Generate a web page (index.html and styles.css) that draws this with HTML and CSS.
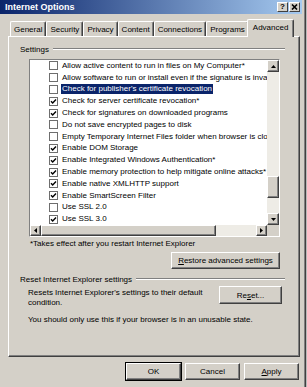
FILE: index.html
```html
<!DOCTYPE html>
<html lang="en">
<head>
  <meta charset="UTF-8" />
  <meta name="viewport" content="width=device-width, initial-scale=1" />
  <title>Internet Options</title>

  <!-- Dialog styles -->
  <link rel="stylesheet" href="styles.css">
</head>
<body>
  <div class="window">
    <!-- Title bar -->
    <div class="titlebar">
      <span class="title">Internet Options</span>
      <div class="caption">
        <span class="cap-btn">?</span>
        <span class="cap-btn">
          <svg width="7" height="6" viewBox="0 0 7 6"><path d="M1 0.5 L6 5.5 M6 0.5 L1 5.5" stroke="#000" stroke-width="1.6" fill="none"/></svg>
        </span>
      </div>
    </div>

    <div class="client">
      <!-- Tabs -->
      <div class="tabs">
        <span class="tab">General</span>
        <span class="tab">Security</span>
        <span class="tab">Privacy</span>
        <span class="tab">Content</span>
        <span class="tab">Connections</span>
        <span class="tab">Programs</span>
        <span class="tab active">Advanced</span>
      </div>

      <div class="panel">
        <div class="group-head"><span>Settings</span><i class="etch"></i></div>

        <!-- Settings list -->
        <div class="listbox">
          <div class="list-main">
            <ul class="items">
              <li class="item"><span class="check"></span><span class="label">Allow active content to run in files on My Computer*</span></li>
              <li class="item"><span class="check"></span><span class="label">Allow software to run or install even if the signature is invalid</span></li>
              <li class="item selected"><span class="check"></span><span class="label">Check for publisher's certificate revocation</span></li>
              <li class="item"><span class="check on"></span><span class="label">Check for server certificate revocation*</span></li>
              <li class="item"><span class="check on"></span><span class="label">Check for signatures on downloaded programs</span></li>
              <li class="item"><span class="check"></span><span class="label">Do not save encrypted pages to disk</span></li>
              <li class="item"><span class="check"></span><span class="label">Empty Temporary Internet Files folder when browser is closed</span></li>
              <li class="item"><span class="check on"></span><span class="label">Enable DOM Storage</span></li>
              <li class="item"><span class="check on"></span><span class="label">Enable Integrated Windows Authentication*</span></li>
              <li class="item"><span class="check on"></span><span class="label">Enable memory protection to help mitigate online attacks*</span></li>
              <li class="item"><span class="check on"></span><span class="label">Enable native XMLHTTP support</span></li>
              <li class="item"><span class="check on"></span><span class="label">Enable SmartScreen Filter</span></li>
              <li class="item"><span class="check"></span><span class="label">Use SSL 2.0</span></li>
              <li class="item"><span class="check on"></span><span class="label">Use SSL 3.0</span></li>
            </ul>
            <div class="vscroll">
              <span class="sb-btn"><svg width="5" height="3" viewBox="0 0 5 3"><polygon points="2.5,0 5,3 0,3" fill="#000"/></svg></span>
              <div class="v-track"><span class="v-thumb"></span></div>
              <span class="sb-btn"><svg width="5" height="3" viewBox="0 0 5 3"><polygon points="0,0 5,0 2.5,3" fill="#000"/></svg></span>
            </div>
          </div>
          <div class="hscroll">
            <span class="sb-btn"><svg width="3" height="5" viewBox="0 0 3 5"><polygon points="0,2.5 3,0 3,5" fill="#000"/></svg></span>
            <div class="h-track"><span class="h-thumb"></span></div>
            <span class="sb-btn"><svg width="3" height="5" viewBox="0 0 3 5"><polygon points="0,0 3,2.5 0,5" fill="#000"/></svg></span>
            <span class="sb-corner"></span>
          </div>
        </div>

        <div class="note">*Takes effect after you restart Internet Explorer</div>
        <div class="restore-row">
          <span class="btn btn-restore"><u>R</u>estore advanced settings</span>
        </div>

        <div class="group-head reset-head"><span>Reset Internet Explorer settings</span><i class="etch"></i></div>
        <div class="reset-row">
          <p class="reset-text">Resets Internet Explorer's settings to their default<br>condition.</p>
          <span class="btn btn-reset">Re<u>s</u>et...</span>
        </div>
        <p class="warn">You should only use this if your browser is in an unusable state.</p>
      </div>

      <!-- Dialog buttons -->
      <div class="footer">
        <span class="btn default">OK</span>
        <span class="btn">Cancel</span>
        <span class="btn"><u>A</u>pply</span>
      </div>
    </div>
  </div>
</body>
</html>
```

FILE: styles.css
```css
/* === BASE === */
body {
  margin: 0;
  background: #b9b9b9;
  font-family: "Liberation Sans", Arial, sans-serif;
  font-size: 8px;
  color: #000;
}

p {
  margin: 0;
}

/* === WINDOW === */
.window {
  width: 302px;
  height: 387px;
  padding-right: 3px;
  background: #d4d0c8;
  border-right: 1px solid #404040;
  box-shadow: inset -1px 0 #808080;
  display: flex;
  flex-direction: column;
}

.titlebar {
  height: 14px;
  flex: none;
  padding: 0 2px 0 5px;
  background: linear-gradient(to right, #0a246a, #a6caf0);
  display: flex;
  align-items: center;
  justify-content: space-between;
}

.title {
  color: #fff;
  font-weight: bold;
  font-size: 9px;
}

.caption {
  display: flex;
  gap: 1px;
}

.cap-btn {
  width: 11px;
  height: 10px;
  box-sizing: border-box;
  background: #d4d0c8;
  border: 1px solid;
  border-color: #fff #404040 #404040 #fff;
  display: grid;
  place-items: center;
  font-weight: bold;
  font-size: 8px;
  line-height: 1;
}

/* === CLIENT AREA === */
.client {
  flex: 1;
  padding: 5px 2px 0 8px;
  display: flex;
  flex-direction: column;
}

/* === TABS === */
.tabs {
  height: 17px;
  padding-left: 2px;
  display: flex;
  align-items: flex-end;
  position: relative;
  z-index: 1;
}

.tab {
  height: 15px;
  box-sizing: border-box;
  padding: 0 3px;
  background: #d4d0c8;
  border: 1px solid;
  border-color: #fff #404040 transparent #fff;
  border-bottom: none;
  border-radius: 2px 2px 0 0;
  box-shadow: inset -1px 0 #808080;
  display: flex;
  align-items: center;
  white-space: nowrap;
}

.tab.active {
  height: 18px;
  margin: 0 0 -1px -2px;
  padding: 0 5px 2px;
}

/* === PANEL === */
.panel {
  height: 321px;
  box-sizing: border-box;
  padding: 7px 14px 0 11px;
  border: 1px solid;
  border-color: #fff #404040 #404040 #fff;
  box-shadow: inset -1px -1px #808080;
  display: flex;
  flex-direction: column;
}

.group-head {
  height: 10px;
  display: flex;
  align-items: center;
  white-space: nowrap;
}

.etch {
  flex: 1;
  margin-left: 4px;
  border-top: 1px solid #808080;
  border-bottom: 1px solid #fff;
}

/* === LIST BOX === */
.listbox {
  height: 178px;
  box-sizing: border-box;
  margin: 5px 5px 0 9px;
  background: #fff;
  border: 1px solid;
  border-color: #808080 #fff #fff #808080;
  display: flex;
  flex-direction: column;
}

.list-main {
  height: 165.2px;
  display: flex;
}

.items {
  flex: 1;
  margin: 0;
  padding: 0;
  list-style: none;
  overflow: hidden;
}

.item {
  height: 11.8px;
  display: flex;
  align-items: center;
  white-space: nowrap;
}

.check {
  flex: none;
  width: 9px;
  height: 9px;
  box-sizing: border-box;
  margin-left: 19px;
  background: #fff;
  border: 1px solid #6e6e6e;
}

.check.on {
  background: #fff url("data:image/svg+xml,%3Csvg xmlns='http://www.w3.org/2000/svg' width='7' height='7' viewBox='0 0 7 7'%3E%3Cpath d='M1 3.2 L2.7 5 L6 1.5' fill='none' stroke='%23000' stroke-width='1.4'/%3E%3C/svg%3E") center no-repeat;
}

.label {
  margin-left: 3px;
  padding: 0 1px;
  line-height: 10px;
}

.item.selected .label {
  background: #0a246a;
  color: #fff;
}

/* === SCROLLBARS === */
.sb-btn,
.v-thumb,
.h-thumb,
.btn {
  box-sizing: border-box;
  background: #d4d0c8;
  border: 1px solid;
  border-color: #fff #404040 #404040 #fff;
  box-shadow: inset -1px -1px #808080;
}

.sb-btn {
  flex: none;
  width: 12px;
  height: 12px;
  display: grid;
  place-items: center;
}

.vscroll {
  width: 12px;
  background: #eeece6;
  display: flex;
  flex-direction: column;
}

.v-track {
  flex: 1;
}

.v-thumb {
  display: block;
  height: 22px;
  margin-top: 104px;
}

.hscroll {
  height: 11px;
  display: flex;
}

.hscroll .sb-btn {
  width: 11px;
  height: 11px;
}

.h-track {
  flex: 1;
  background: #eeece6;
}

.h-thumb {
  display: block;
  width: 175px;
  height: 11px;
}

.sb-corner {
  width: 12px;
  background: #d4d0c8;
}

/* === BUTTONS AND TEXT === */
.note {
  margin: 2px 0 0 10px;
  line-height: 10px;
}

.restore-row {
  margin: 3px 5px 0 0;
  display: flex;
  justify-content: flex-end;
}

.btn {
  height: 17px;
  display: flex;
  align-items: center;
  justify-content: center;
  white-space: nowrap;
}

.btn-restore {
  width: 109px;
}

.reset-head {
  margin-top: 5px;
}

.reset-row {
  margin: 2px 3px 0 8px;
  display: flex;
  justify-content: space-between;
  align-items: flex-start;
}

.reset-text {
  margin-top: 2px;
  line-height: 9.5px;
}

.btn-reset {
  width: 63px;
  height: 18px;
}

.warn {
  margin: 8px 0 0 8px;
  line-height: 9.5px;
}

.footer {
  margin-top: 6px;
  padding-right: 1px;
  display: flex;
  justify-content: flex-end;
  gap: 4px;
}

.footer .btn {
  width: 55px;
}

.btn.default {
  outline: 1px solid #000;
}
```
